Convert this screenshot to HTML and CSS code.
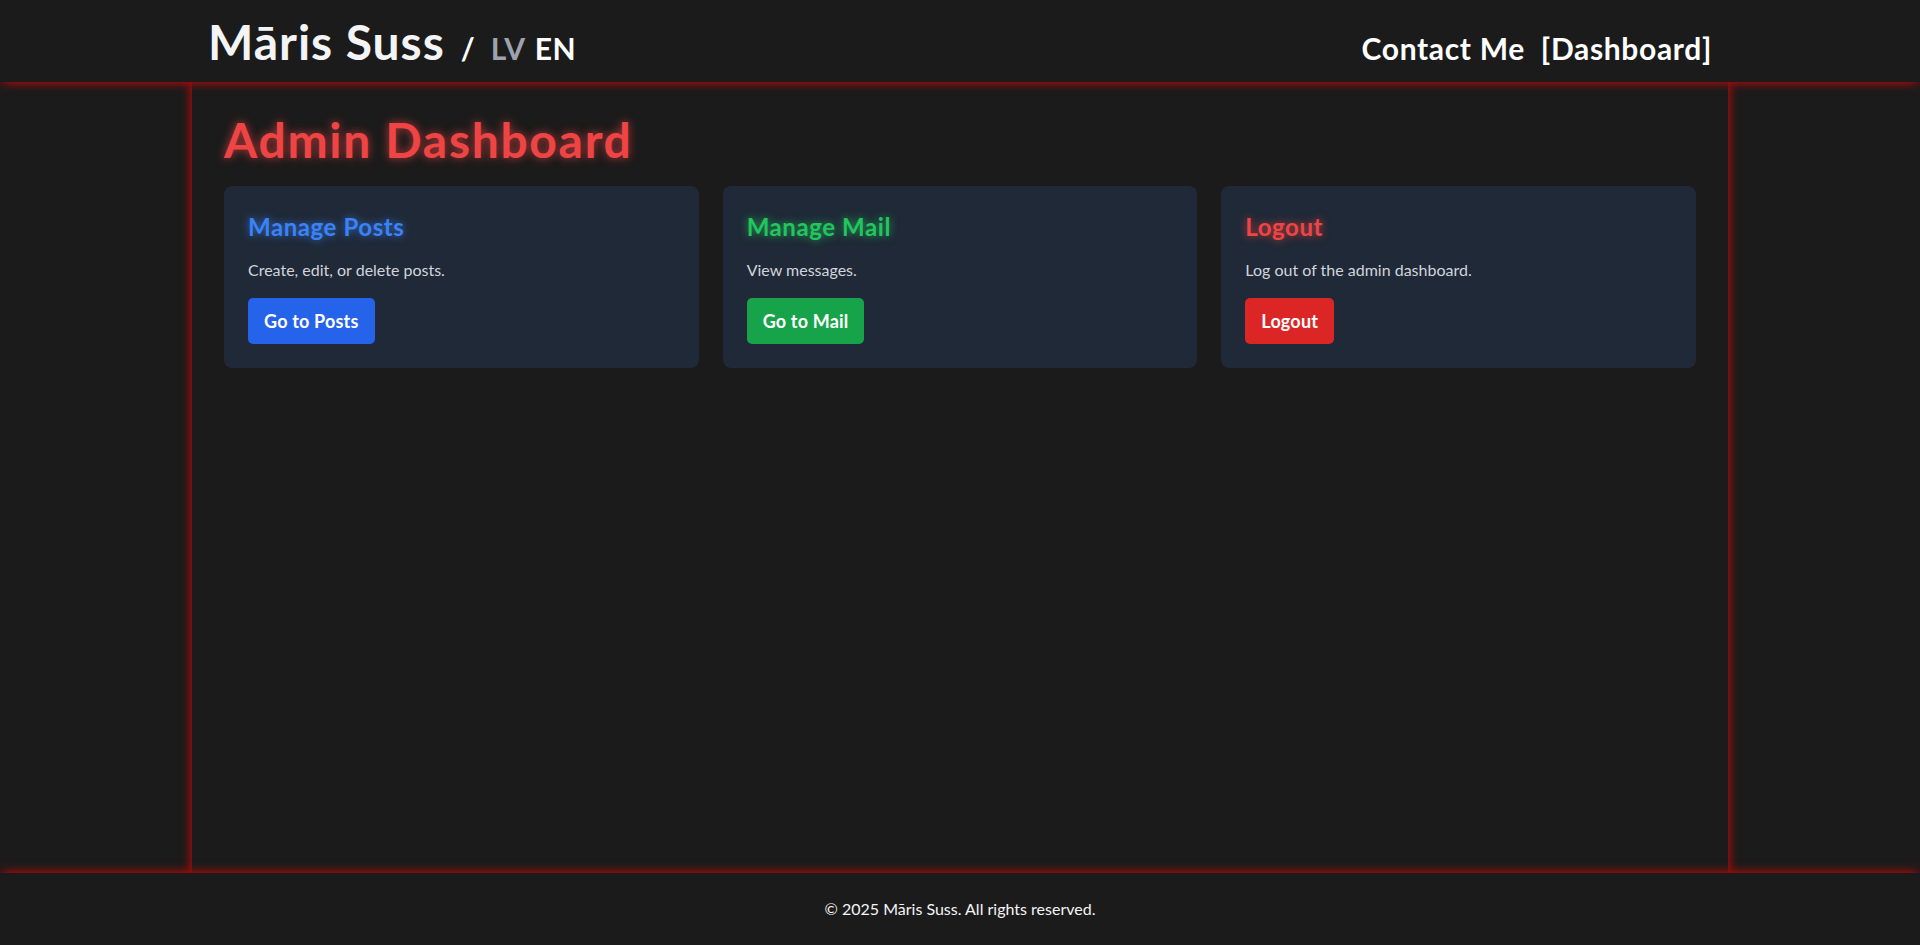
FILE: index.html
```html
<!DOCTYPE html>
<html lang="en">
    <head>
        <meta charset="utf-8">
        <title>Admin Dashboard - Māris Suss</title>
        <link rel="stylesheet" href="styles.css">
    </head>

    <body>
        <header class="site_header">
            <div class="header_inner">
                <div class="brand">
                    <a href="#" class="brand_name">Māris Suss</a>
                    <span class="brand_slash">/</span>
                    <a href="#" class="lang lang_off">LV</a>
                    <a href="#" class="lang lang_on">EN</a>
                </div>
                <nav class="site_nav">
                    <a href="#">Contact Me</a>
                    <a href="#">[Dashboard]</a>
                </nav>
            </div>
        </header>

        <main class="page">
            <h1 class="page_title">Admin Dashboard</h1>

            <div class="card_grid">
                <div class="card">
                    <h2 class="card_title title_blue">Manage Posts</h2>
                    <p class="card_text">Create, edit, or delete posts.</p>
                    <a href="#" class="btn btn_blue">Go to Posts</a>
                </div>

                <div class="card">
                    <h2 class="card_title title_green">Manage Mail</h2>
                    <p class="card_text">View messages.</p>
                    <a href="#" class="btn btn_green">Go to Mail</a>
                </div>

                <div class="card">
                    <h2 class="card_title title_red">Logout</h2>
                    <p class="card_text">Log out of the admin dashboard.</p>
                    <a href="#" class="btn btn_red">Logout</a>
                </div>
            </div>
        </main>

        <footer class="site_footer">
            <p>&copy; 2025 Māris Suss. All rights reserved.</p>
        </footer>
    </body>
</html>
```

FILE: styles.css
```css
*
{
    box-sizing:border-box;
}

body
{
    margin:0;
    min-height:100vh;
    display:flex;
    flex-direction:column;
    background-color:#1b1b1b;
    color:#f3f4f6;
    font-family:Lato, "Liberation Sans", sans-serif;
}

a
{
    color:inherit;
    text-decoration:none;
}

/* header */

.site_header
{
    position:relative;
    z-index:2;
    background-color:#1b1b1b;
    box-shadow:0 3px 10px -3px rgba(255,0,0,0.9);
}

.header_inner
{
    width:80%;
    margin:0 auto;
    padding:18px 16px 16px 16px;
    display:flex;
    justify-content:space-between;
    align-items:baseline;
}

.brand
{
    display:flex;
    align-items:baseline;
}

.brand_name
{
    font-size:48px;
    line-height:48px;
    font-weight:700;
    letter-spacing:0.02em;
    color:#f3f4f6;
}

.brand_slash
{
    font-size:30px;
    line-height:36px;
    font-weight:700;
    color:#ffffff;
    margin:0 16px 0 16px;
}

.lang
{
    font-size:30px;
    line-height:36px;
    font-weight:700;
    letter-spacing:0.02em;
}

.lang_off
{
    color:#9ca3af;
    margin-right:9px;
}

.lang_on
{
    color:#ffffff;
}

.site_nav
{
    display:flex;
    gap:16px;
    font-size:30px;
    line-height:36px;
    font-weight:700;
    letter-spacing:0.022em;
    color:#ffffff;
}

/* main */

.page
{
    flex-grow:1;
    width:80%;
    margin:0 auto;
    padding:34px 32px 32px 32px;
    box-shadow:0 0 10px rgba(255,0,0,0.9);
}

.page_title
{
    margin:0 0 22px 0;
    font-size:48px;
    line-height:48px;
    font-weight:700;
    letter-spacing:0.035em;
    color:#ef4444;
    text-shadow:0 0 10px rgba(239,68,68,0.75);
}

.card_grid
{
    display:grid;
    grid-template-columns:repeat(3, 1fr);
    gap:24px;
}

.card
{
    background-color:#1f2937;
    border-radius:8px;
    padding:24px;
}

.card_title
{
    margin:0 0 15px 0;
    padding-top:1px;
    font-size:24px;
    line-height:32px;
    font-weight:700;
    letter-spacing:0.024em;
}

.title_blue
{
    color:#3b82f6;
    text-shadow:0 0 8px rgba(59,130,246,0.8);
}

.title_green
{
    color:#22c55e;
    text-shadow:0 0 8px rgba(34,197,94,0.8);
}

.title_red
{
    color:#ef4444;
    text-shadow:0 0 8px rgba(239,68,68,0.8);
}

.card_text
{
    margin:0 0 16px 0;
    font-size:16px;
    line-height:24px;
    color:#d1d5db;
}

.btn
{
    display:inline-block;
    padding:9px 16px;
    border-radius:5px;
    font-size:18px;
    line-height:28px;
    font-weight:700;
    letter-spacing:0.01em;
    color:#ffffff;
}

.btn_blue
{
    background-color:#2563eb;
}

.btn_green
{
    background-color:#16a34a;
}

.btn_red
{
    background-color:#dc2626;
}

/* footer */

.site_footer
{
    position:relative;
    z-index:2;
    background-color:#1b1b1b;
    box-shadow:0 -3px 10px -3px rgba(255,0,0,0.9);
    padding:24px 16px;
    text-align:center;
}

.site_footer p
{
    margin:0;
    font-size:16px;
    line-height:24px;
    color:#f3f4f6;
}
```
